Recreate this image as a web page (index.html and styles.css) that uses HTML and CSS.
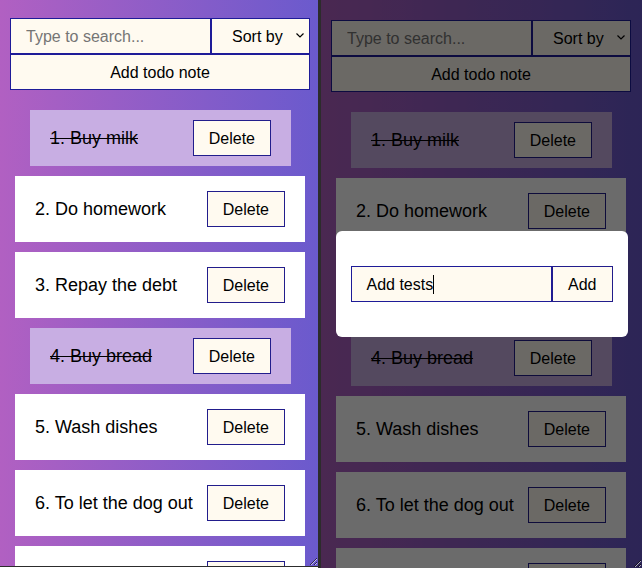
FILE: index.html
```html
<!DOCTYPE html>
<html lang="en">
<head>
<meta charset="utf-8">
<title>Todo</title>
<link rel="stylesheet" href="styles.css">
</head>
<body>
<div class="app">
  <section class="panel panel-left">
    <div class="todo">
      <div class="controls">
        <div class="search-row">
          <input class="field search" type="text" placeholder="Type to search...">
          <div class="sort-wrap">
            <select class="field sort"><option>Sort by</option><option>Name</option><option>Status</option></select>
            <svg class="chevron" width="8" height="5" viewBox="0 0 8 5" aria-hidden="true"><path d="M0.5 0.5 L4 4 L7.5 0.5" fill="none" stroke="#000" stroke-width="1.2"/></svg>
          </div>
        </div>
        <button class="field add-note">Add todo note</button>
      </div>
      <ul class="list">
        <li class="item done"><span class="text">1. Buy milk</span><button class="btn">Delete</button></li>
        <li class="item"><span class="text">2. Do homework</span><button class="btn">Delete</button></li>
        <li class="item"><span class="text">3. Repay the debt</span><button class="btn">Delete</button></li>
        <li class="item done"><span class="text">4. Buy bread</span><button class="btn">Delete</button></li>
        <li class="item"><span class="text">5. Wash dishes</span><button class="btn">Delete</button></li>
        <li class="item"><span class="text">6. To let the dog out</span><button class="btn">Delete</button></li>
        <li class="item"><span class="text">7. Add tests</span><button class="btn">Delete</button></li>
      </ul>
    </div>
  </section>
  <div class="divider"></div>
  <section class="panel panel-right">
    <div class="todo">
      <div class="controls">
        <div class="search-row">
          <input class="field search" type="text" placeholder="Type to search...">
          <div class="sort-wrap">
            <select class="field sort"><option>Sort by</option><option>Name</option><option>Status</option></select>
            <svg class="chevron" width="8" height="5" viewBox="0 0 8 5" aria-hidden="true"><path d="M0.5 0.5 L4 4 L7.5 0.5" fill="none" stroke="#000" stroke-width="1.2"/></svg>
          </div>
        </div>
        <button class="field add-note">Add todo note</button>
      </div>
      <ul class="list">
        <li class="item done"><span class="text">1. Buy milk</span><button class="btn">Delete</button></li>
        <li class="item"><span class="text">2. Do homework</span><button class="btn">Delete</button></li>
        <li class="item"><span class="text">3. Repay the debt</span><button class="btn">Delete</button></li>
        <li class="item done"><span class="text">4. Buy bread</span><button class="btn">Delete</button></li>
        <li class="item"><span class="text">5. Wash dishes</span><button class="btn">Delete</button></li>
        <li class="item"><span class="text">6. To let the dog out</span><button class="btn">Delete</button></li>
        <li class="item"><span class="text">7. Add tests</span><button class="btn">Delete</button></li>
      </ul>
    </div>
    <div class="overlay">
      <div class="modal">
        <div class="modal-field"><span class="modal-value">Add tests</span><span class="caret"></span></div>
        <button class="btn">Add</button>
      </div>
    </div>
  </section>
</div>
</body>
</html>
```
FILE: styles.css
```css
* {
  box-sizing: border-box;
}

html, body {
  margin: 0;
  padding: 0;
  background: #ffffff;
  font-family: "Liberation Sans", Arial, sans-serif;
  color: #000;
}

.app {
  display: flex;
  align-items: flex-start;
  height: 568px;
  overflow: hidden;
}

.panel {
  position: relative;
  overflow: hidden;
  resize: both;
  background: linear-gradient(to right, #b160c2 0px, #6a5acd 320px);
}

.panel-left {
  width: 318px;
  height: 567px;
  border-bottom: 1px solid #2c2c2c;
}

.divider {
  width: 3px;
  height: 568px;
  background: #2c2c2c;
}

.panel-right {
  width: 321px;
  height: 568px;
}

.todo {
  width: 320px;
  padding-top: 18px;
}

.panel-right .todo {
  padding-top: 20px;
}

.controls {
  margin: 0 10px;
}

.search-row {
  display: flex;
}

.field {
  height: 36px;
  margin: 0;
  border: 1px solid #1e1b98;
  background: #fffaf0;
  font-family: "Liberation Sans", Arial, sans-serif;
  font-size: 16px;
  color: #000;
  border-radius: 0;
  outline: none;
}

.search {
  flex: 1;
  min-width: 0;
  padding: 1px 15px 0;
}

.search::placeholder {
  color: #757575;
}

.sort-wrap {
  position: relative;
  width: 99px;
}

.sort {
  width: 100%;
  padding: 1px 0 0 20px;
  appearance: none;
  -webkit-appearance: none;
}

.chevron {
  position: absolute;
  right: 6px;
  top: 15px;
  pointer-events: none;
}

.add-note {
  display: block;
  width: 100%;
  padding: 1px 0 0;
}

.list {
  list-style: none;
  margin: 20px 0 0;
  padding: 0;
  display: flex;
  flex-direction: column;
  gap: 10px;
}

.item {
  margin: 0 15px;
  padding: 15px 20px;
  background: #ffffff;
  display: flex;
  align-items: center;
  justify-content: space-between;
  font-size: 18px;
}

.item.done {
  margin: 0 29px 0 30px;
  padding: 10px 20px;
  background: #c8aee3;
}

.item.done .text {
  text-decoration: line-through;
}

.btn {
  height: 36px;
  margin: 0;
  padding: 1px 15px 0;
  border: 1px solid #221d8c;
  background: #fffaf0;
  font-family: "Liberation Sans", Arial, sans-serif;
  font-size: 16px;
  line-height: 18px;
  color: #000;
  border-radius: 0;
}

.overlay {
  position: absolute;
  inset: 0;
  background: rgba(0, 0, 0, 0.58);
  display: flex;
  align-items: center;
  justify-content: center;
}

.modal {
  width: 292px;
  padding: 35px 15px;
  background: #ffffff;
  border-radius: 6px;
  display: flex;
}

.modal-field {
  flex: 1;
  min-width: 0;
  height: 36px;
  padding: 1px 15px 0;
  border: 1px solid #1e1b98;
  background: #fffaf0;
  font-size: 16px;
  display: flex;
  align-items: center;
}

.caret {
  width: 1px;
  height: 19px;
  background: #000;
}
```
